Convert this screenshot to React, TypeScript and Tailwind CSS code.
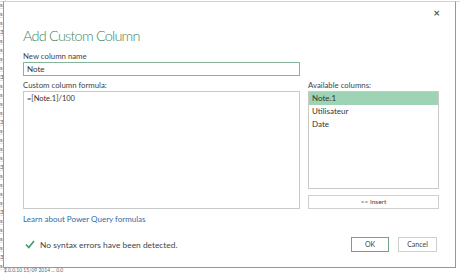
import React from "react";

const rows = Array.from({ length: 30 });

export default function App() {
  const font = { fontFamily: 'Lato, "Noto Sans", sans-serif' };
  return (
    <div className="relative w-[460px] h-[273px] bg-white overflow-hidden" style={font}>
      {/* underlying sheet */}
      <div className="absolute left-0 top-0 w-[6px] h-[273px] flex flex-col border-r border-[#d4d4d4] overflow-hidden">
        {rows.map((_, i) => (
          <div key={i} className="h-[9px] text-[6px] leading-[9px] text-[#555] border-b border-[#e2e2e2]">
            {i % 5 === 3 ? "3" : "s"}
          </div>
        ))}
      </div>
      <div className="absolute left-0 top-0 w-[460px] h-[2px] border-b border-[#d8d8d8]" />
      <div className="absolute left-0 top-[268px] w-[460px] h-[5px] text-[5px] leading-[5px] text-[#666] pl-[4px]">
        2.0.0.10 15/09 2014 ... 0.0
      </div>

      {/* dialog */}
      <div className="absolute left-[3px] top-[1px] w-[453px] h-[267px] bg-white border border-[#7fa58f] border-t-[#c8d6ce] flex flex-col pl-[19px] pr-[18px] text-[#444]">
        <div className="flex justify-end pt-[6px] h-[20px]">
          <span className="text-[11px] leading-[10px] text-[#555] font-bold mr-[-3px]">×</span>
        </div>
        <div className="text-[14.5px] leading-[20px] font-light tracking-[-0.8px] text-[#3f8760] mt-[4px]">Add Custom Column</div>
        <div className="text-[7.8px] leading-[10px] mt-[5px]">New column name</div>
        <div className="w-[277px] h-[14px] border border-[#86b39a] mt-[1px] text-[8px] leading-[12px] pl-[3px] text-[#333]">Note</div>
        <div className="flex gap-[8px] mt-[4px]">
          <div className="flex flex-col">
            <div className="text-[7.8px] leading-[10px]">Custom column formula:</div>
            <div className="w-[277px] h-[118px] border border-[#c9c9c9] mt-[1px] text-[7.5px] leading-[10px] pl-[3px] pt-[2px] text-[#333]">=[Note.1]/100</div>
          </div>
          <div className="flex flex-col">
            <div className="text-[7.8px] leading-[10px]">Available columns:</div>
            <div className="w-[131px] h-[98px] border border-[#c9c9c9] mt-[1px] flex flex-col text-[8px] text-[#333]">
              <div className="h-[13px] leading-[13px] bg-[#9fd3b5] pl-[3px]">Note.1</div>
              <div className="h-[13px] leading-[13px] pl-[3px]">Utilisateur</div>
              <div className="h-[13px] leading-[13px] pl-[3px]">Date</div>
            </div>
            <div className="w-[131px] h-[14px] border border-[#cfcfcf] mt-[6px] text-[6.5px] leading-[12px] text-center text-[#444]">&lt;&lt; Insert</div>
          </div>
        </div>
        <div className="text-[8px] leading-[10px] text-[#2e6ea6] mt-[5px]">Learn about Power Query formulas</div>
        <div className="flex items-center justify-between mt-[13px]">
          <div className="flex items-center">
            <svg width="10" height="9" viewBox="0 0 10 9" className="ml-[2px] mr-[5px]">
              <path d="M1 4.5 L3.8 7.5 L9 1" fill="none" stroke="#3f9a6a" strokeWidth="1.6" />
            </svg>
            <span className="text-[8.4px] leading-[10px] text-[#444]">No syntax errors have been detected.</span>
          </div>
          <div className="flex gap-[9px]">
            <div className="w-[38px] h-[15px] border border-[#6fa487] text-[7px] leading-[13px] text-center text-[#444]">OK</div>
            <div className="w-[39px] h-[15px] border border-[#cfcfcf] text-[7px] leading-[13px] text-center text-[#444]">Cancel</div>
          </div>
        </div>
      </div>
    </div>
  );
}
